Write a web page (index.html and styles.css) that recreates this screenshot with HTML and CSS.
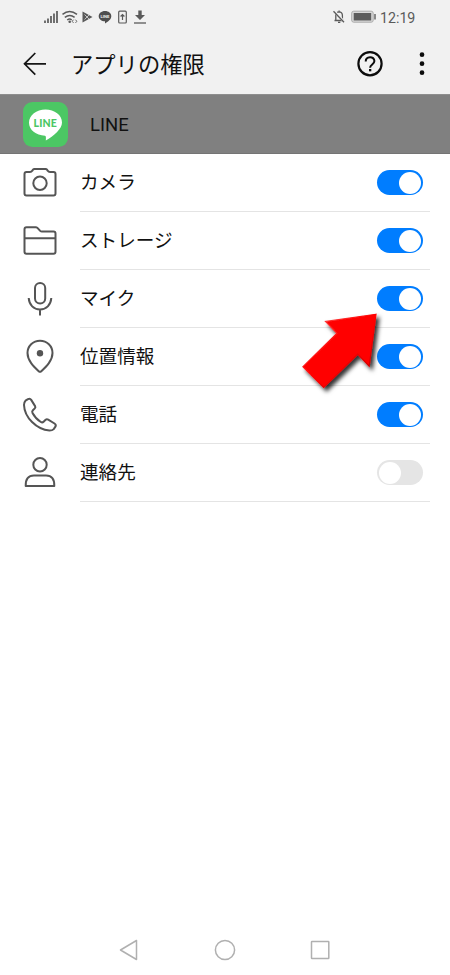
FILE: index.html
```html
<!DOCTYPE html>
<html lang="ja">
<head>
<meta charset="utf-8">
<title>アプリの権限</title>
<link rel="stylesheet" href="styles.css">
</head>
<body>
<div class="screen">
  <div class="status">
    <svg class="status-left" width="104" height="16" viewBox="44 9 104 16">
      <path d="M45 20.5v2.5M48 18.5v4.500M51 16v7M54 13.500v9.500M57 11v12" stroke="#5a5a5a" stroke-width="1.7"/>
      <g fill="none" stroke="#5a5a5a" stroke-width="1.5"><path d="M62.500 14.300q7-5.500 14.500 0M64.800 17.300q5-3.800 9.800 0M67.200 20q2.500-1.800 4.500 0"/></g>
      <circle cx="69.700" cy="21.700" r="1.300" fill="#5a5a5a"/>
      <path d="M73.500 19.700l-1.300 1.600 1.300 1.600M75.500 19.700l1.300 1.600-1.300 1.600" fill="none" stroke="#666" stroke-width="1"/>
      <path d="M82.500 11.500L92.500 17l-10 5.500z" fill="#5a5a5a"/>
      <path d="M84.500 14.500l5 5M84.500 19.500l5-5" stroke="#f1f1f1" stroke-width=".7"/>
      <path d="M105 11c3.600 0 6.300 2.200 6.300 5.200 0 3-3.300 5.500-6.300 7.300v-2.200c-3.600-.1-6.300-2.300-6.300-5.100s2.700-5.200 6.300-5.200z" fill="#4e4e4e"/>
      <text x="105" y="17.800" class="tiny-line">LINE</text>
      <rect x="118.700" y="11.200" width="7.600" height="11.800" rx="1" fill="none" stroke="#5a5a5a" stroke-width="1.200"/>
      <path d="M122.500 20v-5M120.600 16.500l1.900-2 1.900 2" fill="none" stroke="#5a5a5a" stroke-width="1.200"/>
      <path d="M138.300 10.500h3.400v4.500h3.300l-5 5-5-5h3.300z" fill="#5a5a5a"/>
      <path d="M134 23h12" stroke="#5a5a5a" stroke-width="1.300"/>
    </svg>
    <div class="status-right">
      <svg width="45" height="16" viewBox="332 9 45 16">
        <path d="M334.500 20.500h9.500M335.800 20v-4.500q0-3.500 3.300-3.700 3.300.2 3.300 3.700V20M339.100 10.500v1M338 22.300h2.300" fill="none" stroke="#5a5a5a" stroke-width="1.300"/>
        <path d="M334.300 11.200l10 10.800" stroke="#f1f1f1" stroke-width="2.500"/>
        <path d="M333.500 11.300l10.500 11" stroke="#5a5a5a" stroke-width="1.300"/>
        <rect x="351.700" y="11.200" width="21.500" height="11" rx="2" fill="#d8d8d8" stroke="#aaa"/>
        <rect x="353.700" y="13" width="17.500" height="7.500" fill="#5c5c5c"/>
        <path d="M375 14v5.500" stroke="#666" stroke-width="1.500"/>
      </svg>
      <span class="clock">12:19</span>
    </div>
  </div>

  <header class="header">
    <svg class="back" width="26" height="26" viewBox="22 51 26 26"><path d="M46 63.800H24M35.300 53L24.500 63.800l10.800 10.800" fill="none" stroke="#161616" stroke-width="1.700"/></svg>
    <h1 class="title">アプリの権限</h1>
    <svg class="help" width="28" height="28" viewBox="356 50 28 28">
      <circle cx="370" cy="63.700" r="11.600" fill="none" stroke="#0c0c0c" stroke-width="2.200"/>
      <path d="M365.700 61.500c0-5.700 8.700-5.700 8.700-.4 0 3.300-4.300 3.400-4.300 6.600" fill="none" stroke="#0c0c0c" stroke-width="2"/>
      <rect x="369" y="69" width="2.300" height="2.300" fill="#0c0c0c"/>
    </svg>
    <svg width="8" height="26" viewBox="418.500 51 8 26" fill="#0c0c0c"><circle cx="422.500" cy="54.700" r="2.350"/><circle cx="422.500" cy="63.700" r="2.350"/><circle cx="422.500" cy="72.700" r="2.350"/></svg>
  </header>

  <section class="app">
    <svg width="45" height="45" viewBox="0 0 45 45">
      <rect width="45" height="45" rx="9.500" fill="#4cc764"/>
      <path d="M22.500 7.500C31.500 7.500 39 13 39 20.500c0 6.500-8.200 13.500-16.200 18 .1-1.900.5-4.500-.8-4.800C13 33.300 6 27.800 6 20.700 6 13.400 13.500 7.500 22.500 7.500z" fill="#fff"/>
      <text x="22.300" y="24.700" class="logo-text">LINE</text>
    </svg>
    <span class="app-name">LINE</span>
  </section>

  <main class="list">
    <div class="row">
      <svg class="icon" viewBox="0 0 40 41"><path d="M6.500 10H10q1.500 0 2.200-1.200L13 7.700q.5-.7 1.500-.7h11q1 0 1.500.7l.8 1.100Q28.500 10 30 10h3.500q2 0 2 2v19.500q0 2-2 2h-27q-2 0-2-2V12q0-2 2-2z"/><circle cx="20" cy="21.200" r="6.700"/></svg>
      <div class="cell"><span>カメラ</span><i class="switch on"></i></div>
    </div>
    <div class="row">
      <svg class="icon" viewBox="0 0 40 41"><path d="M6.500 7.200h9.200q1 0 1.700.7l2.800 3q.7.700 1.800.7h11.500q2 0 2 2v18.200q0 2-2 2h-27q-2 0-2-2V9.200q0-2 2-2zM4.500 18.300h31"/></svg>
      <div class="cell"><span>ストレージ</span><i class="switch on"></i></div>
    </div>
    <div class="row">
      <svg class="icon" viewBox="0 0 40 41"><rect x="15" y="5" width="10.200" height="20.500" rx="5.100"/><path d="M8.700 20c.5 7 5 11.500 11.300 11.500S30.800 27 31.300 20M20 31.500v6"/></svg>
      <div class="cell"><span>マイク</span><i class="switch on"></i></div>
    </div>
    <div class="row">
      <svg class="icon" viewBox="0 0 40 41"><path d="M20 4.700c7 0 12.500 5.400 12.500 12.300 0 7.500-6 13.300-11.200 18.200q-1.300 1.200-2.600 0C13.500 30.300 7.500 24.500 7.500 17 7.500 10.100 13 4.700 20 4.700z"/><circle class="dot" cx="20" cy="17.200" r="3.200"/></svg>
      <div class="cell"><span>位置情報</span><i class="switch on"></i></div>
    </div>
    <div class="row">
      <svg class="icon" viewBox="0 0 40 41"><path d="M5.500 6.700L8 5.100q2-1.100 3.200.8l3.900 6.200q.7 1.300-.3 2.300l-1.900 1.900q-1.200 1.200-.4 2.700c2 3.700 4.700 6.800 8.300 9q1.600.9 2.800-.3l2-1.900q1.200-1 2.600-.2l6.300 3.900q2 1.300.9 3.200l-1.700 2.400q-1.400 1.500-4.200 1.500C16.500 35.500 4.500 23.500 4 11q0-2.800 1.500-4.300z"/></svg>
      <div class="cell"><span>電話</span><i class="switch on"></i></div>
    </div>
    <div class="row">
      <svg class="icon" viewBox="0 0 40 41"><circle cx="20" cy="12.700" r="6.700"/><path d="M5.700 34q-.3-10.500 8.300-10.500h12q8.600 0 8.300 10.500z"/></svg>
      <div class="cell"><span>連絡先</span><i class="switch"></i></div>
    </div>
  </main>

  <nav class="nav">
    <svg width="20" height="22" viewBox="0 0 20 22"><path d="M17.500 1.500v19L1.500 11z"/></svg>
    <svg width="22" height="22" viewBox="0 0 22 22"><circle cx="11" cy="11" r="9.600"/></svg>
    <svg width="20" height="22" viewBox="0 0 20 22"><rect x="1.500" y="2.500" width="17.300" height="17" rx=".5"/></svg>
  </nav>

  <svg class="pointer" width="100" height="100" viewBox="295 305 100 100">
    <defs>
      <linearGradient id="red" x1="0" y1="0" x2="1" y2="1"><stop offset="0" stop-color="#ff5a5a"/><stop offset=".5" stop-color="#f00"/><stop offset="1" stop-color="#b40000"/></linearGradient>
      <filter id="shade" x="-20%" y="-20%" width="150%" height="150%"><feDropShadow dx="3" dy="3.500" stdDeviation="2.200" flood-color="#000" flood-opacity=".8"/></filter>
    </defs>
    <path d="M376 314.300L325.500 321.500l11.500 11.800L302.900 366.700l20.800 20.800L357.700 354.200l11.500 12z" fill="#f00" stroke="url(#red)" stroke-width="1.200" filter="url(#shade)"/>
  </svg>
</div>
</body>
</html>
```
FILE: styles.css
```css
* { box-sizing: border-box; }
body { margin: 0; background: #fff; color: #111; font-family: "Noto Sans CJK JP", sans-serif; }
svg { display: block; flex: none; }
.screen { position: relative; width: 450px; height: 975px; display: flex; flex-direction: column; overflow: hidden; }
.status { height: 34px; background: #f1f1f1; display: flex; justify-content: space-between; align-items: center; padding: 0 35px 0 44px; }
.status-right { display: flex; align-items: center; gap: 3px; }
.clock { font: 14.2px/16px Roboto, sans-serif; color: #5a5a5a; width: 35px; padding-top: 1px; white-space: nowrap; }
.tiny-line { font: bold 4.2px Roboto, sans-serif; fill: #f1f1f1; text-anchor: middle; }
.header { height: 60px; background: #f1f1f1; display: flex; align-items: center; padding: 0 24px 0 22px; }
.title { margin: 0 0 0 23px; padding-bottom: 3px; font-size: 22.3px; line-height: 30px; font-weight: 400; white-space: nowrap; }
.help { margin: 0 34px 0 auto; }
.app { height: 60px; background: #808080; border-top: 1px solid #8e8e8e; border-bottom: 1px solid #747474; display: flex; align-items: center; gap: 22px; padding-left: 23px; }
.app-name { font: 18.5px/24px Roboto, sans-serif; padding-top: 2px; }
.logo-text { font: 900 10.5px Lato, "Liberation Sans", sans-serif; letter-spacing: .2px; fill: #4cc764; text-anchor: middle; }
.row { height: 58px; display: flex; padding: 0 20px; gap: 20px; }
.icon { width: 40px; height: 41px; margin-top: 8px; fill: none; stroke: #555; stroke-width: 2; stroke-linejoin: round; }
.icon .dot { fill: #555; stroke: none; }
.cell { flex: 1; display: flex; align-items: center; justify-content: space-between; padding-right: 7px; border-bottom: 1px solid #e4e4e4; font-size: 18.6px; line-height: 26px; }
.cell span { padding-bottom: 3px; }
.switch { width: 46px; height: 25px; border-radius: 13px; background: #e5e5e5; padding: 1.500px 2px; display: flex; }
.switch::before { content: ""; width: 22px; height: 22px; border-radius: 50%; background: #fff; }
.switch.on { background: #007dff; justify-content: flex-end; }
.nav { margin-top: auto; height: 50px; display: flex; align-items: center; gap: 74.5px; padding-left: 119px; fill: none; stroke: #b0b0b0; stroke-width: 1.500; stroke-linejoin: round; }
.pointer { position: absolute; left: 295px; top: 305px; }
```
